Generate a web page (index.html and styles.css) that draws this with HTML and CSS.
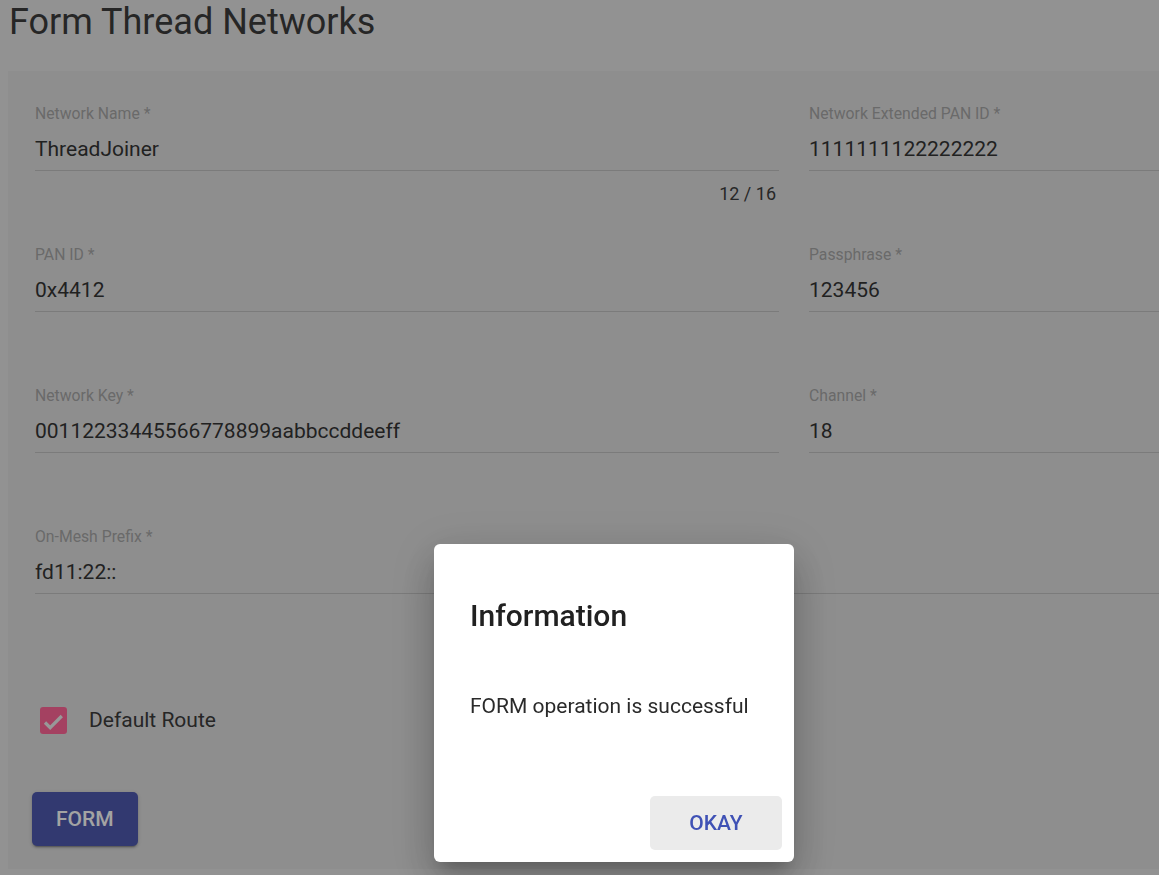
FILE: index.html
```html
<!DOCTYPE html>
<html lang="en">
<head>
<meta charset="utf-8">
<title>Form Thread Networks</title>
<link rel="stylesheet" href="styles.css">
</head>
<body>
<h1 class="page-title">Form Thread Networks</h1>
<div class="card">
  <div class="fields">
    <div class="field">
      <div class="label">Network Name *</div>
      <div class="value">ThreadJoiner</div>
      <div class="line"></div>
      <div class="hint">12 / 16</div>
    </div>
    <div class="field">
      <div class="label">Network Extended PAN ID *</div>
      <div class="value">1111111122222222</div>
      <div class="line"></div>
      <div class="hint"></div>
    </div>
    <div class="field">
      <div class="label">PAN ID *</div>
      <div class="value">0x4412</div>
      <div class="line"></div>
      <div class="hint"></div>
    </div>
    <div class="field">
      <div class="label">Passphrase *</div>
      <div class="value">123456</div>
      <div class="line"></div>
      <div class="hint"></div>
    </div>
    <div class="field">
      <div class="label">Network Key *</div>
      <div class="value">00112233445566778899aabbccddeeff</div>
      <div class="line"></div>
      <div class="hint"></div>
    </div>
    <div class="field">
      <div class="label">Channel *</div>
      <div class="value">18</div>
      <div class="line"></div>
      <div class="hint"></div>
    </div>
    <div class="field field-wide">
      <div class="label">On-Mesh Prefix *</div>
      <div class="value">fd11:22::</div>
      <div class="line"></div>
      <div class="hint"></div>
    </div>
  </div>
  <label class="check-row">
    <span class="checkbox">
      <svg viewBox="0 0 27 27" width="27" height="27"><path d="M5 15.5 L10.2 20.7 L21.8 9" fill="none" stroke="#e0e0e0" stroke-width="3.2"/></svg>
    </span>
    <span class="check-label">Default Route</span>
  </label>
  <button class="btn-raised">FORM</button>
</div>

<div class="backdrop">
  <div class="dialog">
    <h2 class="dialog-title">Information</h2>
    <div class="dialog-content">FORM operation is successful</div>
    <div class="dialog-actions">
      <button class="btn-flat">OKAY</button>
    </div>
  </div>
</div>
</body>
</html>
```

FILE: styles.css
```css
html, body {
  margin: 0;
  padding: 0;
  overflow: hidden;
  height: 100%;
}
body {
  background: #d8d8d8;
  font-family: Roboto, "Noto Sans", "Liberation Sans", sans-serif;
  color: #383838;
}
.page-title {
  margin: 1px 0 0 9px;
  font-size: 36px;
  line-height: 43px;
  font-weight: 400;
  color: #383838;
  white-space: nowrap;
}
.card {
  margin: 27px 0 0 8px;
  width: 1572px;
  height: 798px;
  box-sizing: border-box;
  background: #d2d2d2;
  padding: 34px 24px 0 24px;
}
.fields {
  margin-left: 3px;
  display: grid;
  grid-template-columns: 744px 744px;
  column-gap: 30px;
  row-gap: 43px;
}
.field {
  display: flex;
  flex-direction: column;
}
.field-wide {
  grid-column: 1 / -1;
}
.label {
  font-size: 15.75px;
  line-height: 18px;
  height: 18px;
  color: #9c9c9c;
}
.value {
  margin-top: 14px;
  font-size: 21px;
  line-height: 24px;
  height: 24px;
  color: #323232;
}
.line {
  margin-top: 9px;
  height: 1px;
  background: #b6b6b6;
}
.hint {
  margin-top: 14px;
  height: 18px;
  font-size: 18px;
  line-height: 18px;
  text-align: right;
  color: #3a3a3a;
  padding-right: 3px;
}
.check-row {
  display: flex;
  align-items: center;
  margin: 81px 0 0 8px;
  height: 27px;
}
.checkbox {
  width: 27px;
  height: 27px;
  border-radius: 3px;
  background: #f2608f;
  display: flex;
}
.check-label {
  margin-left: 22px;
  font-size: 21px;
  line-height: 27px;
  color: #383838;
}
.btn-raised {
  display: block;
  margin-top: 58px;
  height: 54px;
  padding: 0 24px;
  border: none;
  border-radius: 5px;
  background: #4b55a5;
  color: #f0f0f0;
  font-family: Roboto, "Noto Sans", "Liberation Sans", sans-serif;
  font-size: 21px;
  font-weight: 500;
  box-shadow: 0 3px 1px -2px rgba(0,0,0,.2), 0 2px 2px 0 rgba(0,0,0,.14), 0 1px 5px 0 rgba(0,0,0,.12);
}
.backdrop {
  position: fixed;
  inset: 0;
  background: rgba(0,0,0,.32);
}
.dialog {
  position: absolute;
  left: 434px;
  top: 544px;
  width: 360px;
  height: 318px;
  box-sizing: border-box;
  background: #ffffff;
  border-radius: 6px;
  box-shadow: 0 11px 15px -7px rgba(0,0,0,.2), 0 24px 38px 3px rgba(0,0,0,.14), 0 9px 46px 8px rgba(0,0,0,.12);
  display: flex;
  flex-direction: column;
}
.dialog-title {
  margin: 48px 36px 0;
  font-size: 30px;
  line-height: 48px;
  font-weight: 500;
  color: #212121;
}
.dialog-content {
  margin: 51px 36px 0;
  font-size: 21px;
  line-height: 30px;
  color: #2a2a2a;
}
.dialog-actions {
  margin-top: 75px;
  padding: 0 12px 12px;
  display: flex;
  justify-content: flex-end;
}
.btn-flat {
  height: 54px;
  width: 132px;
  border: none;
  border-radius: 5px;
  background: #ebebeb;
  color: #3f51b5;
  font-family: Roboto, "Noto Sans", "Liberation Sans", sans-serif;
  font-size: 21px;
  font-weight: 500;
}
```
